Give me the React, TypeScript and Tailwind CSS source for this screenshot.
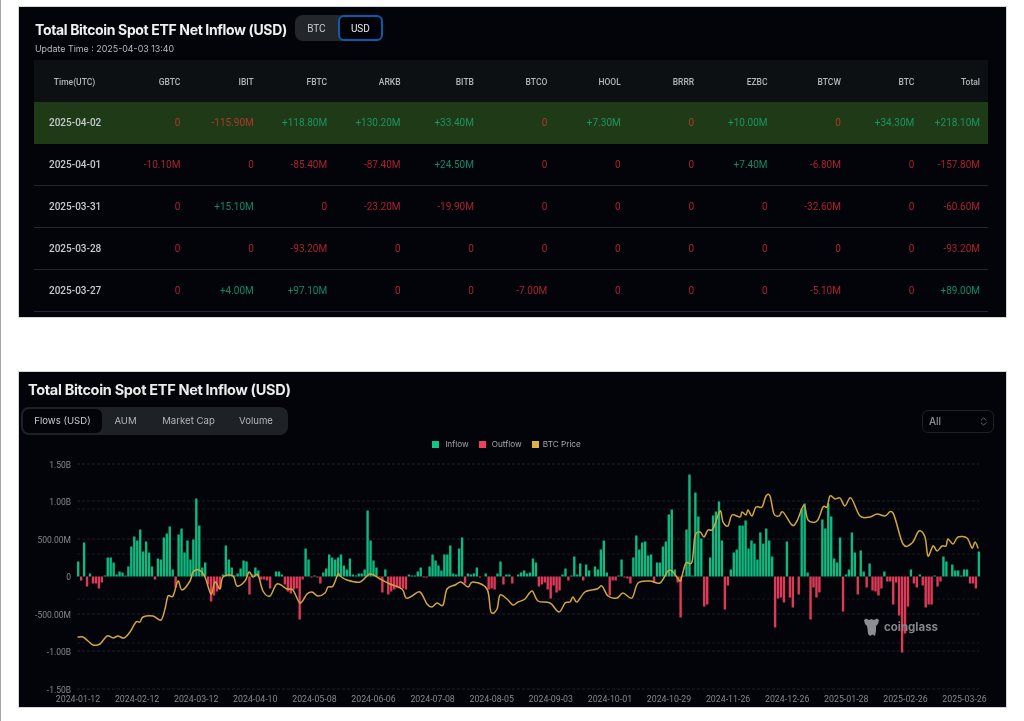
import { ChevronsUpDown } from 'lucide-react';

const columns = ['GBTC', 'IBIT', 'FBTC', 'ARKB', 'BITB', 'BTCO', 'HOOL', 'BRRR', 'EZBC', 'BTCW', 'BTC', 'Total'];

const rows = [
  { date: '2025-04-02', values: ['0', '-115.90M', '+118.80M', '+130.20M', '+33.40M', '0', '+7.30M', '0', '+10.00M', '0', '+34.30M', '+218.10M'] },
  { date: '2025-04-01', values: ['-10.10M', '0', '-85.40M', '-87.40M', '+24.50M', '0', '0', '0', '+7.40M', '-6.80M', '0', '-157.80M'] },
  { date: '2025-03-31', values: ['0', '+15.10M', '0', '-23.20M', '-19.90M', '0', '0', '0', '0', '-32.60M', '0', '-60.60M'] },
  { date: '2025-03-28', values: ['0', '0', '-93.20M', '0', '0', '0', '0', '0', '0', '0', '0', '-93.20M'] },
  { date: '2025-03-27', values: ['0', '+4.00M', '+97.10M', '0', '0', '-7.00M', '0', '0', '0', '-5.10M', '0', '+89.00M'] },
];

// bar heights in px from the zero line, one per trading day
const flows = [
  15, -4, 34, -10, 3, -7, -7, -12, -6, 1, 19, 19, 14, 2, 5, 4, 1, 10, 30, 40, 36, 47, 25, 35, 24, 10, -3, 18, 17, 39, 43, 50, 7, -11, 42, 48, 24, 36, 17, 37, 78, 51, 9, 14, -8, -25, -19, -15, -12, 2, 31, 17, 9, 1, 3, 8, 16, 15, -18, 2, 9, 6, -3, -3, -4, -12, 0, 5, 5, 2, -8, -15, -17, -13, -12, -43, -3, 28, 17, -1, 1, -1, -7, 4, 8, 22, 19, 17, 19,
  22, 11, 7, 18, 2, 1, 3, 3, 7, 66, 36, 16, 9, -1, -16, 7, -18, -15, -13, -11, -11, -12, -13, 2, 1, 1, 5, 9, -1, -1, 10, 22, 16, 11, 6, 22, 22, 31, 3, 2, 28, 39, -7, 3, 2, 3, 9, -1, 0, 3, -13, -12, -13, 3, 15, -8, 2, 2, -7, 0, 2, 4, 6, 3, 4, 18, 14, -10, -8, -6, -13, -22, -9, -16, -14, 2, 8, -4, 1, 20, 2, 13, -4, 12, 6, 0, 10, 7, 27, 36, 4, -19, -4, -4, 1, 17, -1, -2, -7, 19, 41, 27, 34, 35, 21, 22, -6, 14, 14, 30, 35, 62, 67, 7, -6,
  -41, 1, 47, 102, 1, 84, 60, 38, -30, -28, 19, 61, 65, 75, 36, -33, -9, 7, 24, 27, 51, 51, 56, 28, 36, 33, 17, 44, 33, 48, 36, 20, -51, -22, -21, -26, 35, -21, -31, 0, -18, 68, 73, 4, -43, -11, -21, -16, 57, 48, 73, 60, 18, 14, 39, -35, 2, 7, 44, 24, -18, 26, 5, -11, 13, -14, -15, -19, -12, 5, -5, -5, -28, -6, -39, -76, -57, -30, 7, -7, -11, 2, -9, -31, -28, -28, 1, -10, -5, 20, 15, 0, 12, 6, 6, 1, 7, 7, -7, -7, -12, 25,
];

const price =
  '78,638 83,638 88,642 93,646 100,645 107,637 113,639 118,637 124,639 130,633 136,623 140,623 143,618 153,617 161,621 165,610 168,597 173,597 178,582 182,591 190,582 193,573 199,571 205,578 211,595 215,583 220,590 223,578 233,577 237,587 245,582 249,573 253,578 258,576 263,592 270,597 277,585 287,590 293,591 300,604 307,595 312,593 318,597 325,594 328,588 333,587 338,575 ' +
  '340,577 347,581 360,583 370,575 380,580 390,585 402,590 406,599 412,597 420,593 427,605 432,608 437,604 443,606 447,590 455,586 461,583 468,588 473,583 487,590 491,613 497,610 500,596 507,600 513,606 518,603 525,600 532,592 538,602 550,604 559,613 565,604 570,603 573,598 577,603 585,593 597,590 602,587 608,597 617,599 623,594 632,599 638,584 650,582 660,584 668,572 673,573 680,582 ' +
  '682,577 686,564 692,563 695,537 700,533 704,538 708,531 713,530 720,512 723,523 728,527 732,516 740,518 742,513 746,516 748,511 752,517 756,508 762,508 766,497 770,497 774,515 779,517 783,513 792,526 797,522 804,506 808,521 817,522 823,508 827,508 830,497 835,500 840,499 845,507 851,499 860,517 870,518 877,515 885,517 893,514 903,545 912,544 919,532 925,538 928,557 933,547 937,552 942,547 946,547 948,540 953,545 958,538 967,539 972,549 975,543 978,549';

// catmull-rom through the price points so the line reads as a curve
function smoothPath(points: string) {
  const p = points.split(' ').map((s) => s.split(',').map(Number));
  let d = `M${p[0][0]} ${p[0][1]}`;
  for (let i = 0; i < p.length - 1; i++) {
    const a = p[Math.max(i - 1, 0)];
    const b = p[i];
    const c = p[i + 1];
    const e = p[Math.min(i + 2, p.length - 1)];
    const c1 = [b[0] + (c[0] - a[0]) / 6, b[1] + (c[1] - a[1]) / 6];
    const c2 = [c[0] - (e[0] - b[0]) / 6, c[1] - (e[1] - b[1]) / 6];
    d += ` C${c1[0].toFixed(1)} ${c1[1].toFixed(1)} ${c2[0].toFixed(1)} ${c2[1].toFixed(1)} ${c[0]} ${c[1]}`;
  }
  return d;
}

const yLabels = [
  ['1.50B', 465],
  ['1.00B', 502],
  ['500.00M', 540],
  ['0', 577],
  ['-500.00M', 615],
  ['-1.00B', 652],
  ['-1.50B', 690],
] as const;

const dates = ['2024-01-12', '2024-02-12', '2024-03-12', '2024-04-10', '2024-05-08', '2024-06-06', '2024-07-08', '2024-08-05', '2024-09-03', '2024-10-01', '2024-10-29', '2024-11-26', '2024-12-26', '2025-01-28', '2025-02-26', '2025-03-26'];

const gridA = [465, 502, 540, 615, 652, 690];
const gridB = [510, 555, 600, 644];

const tableCols = 'grid grid-cols-[81px_repeat(11,73.4px)_1fr]';
const panel = 'box-border w-[989px] border border-[#d6d6d6] bg-[#02040a]';

function ValueCell({ value, highlight }: { value: string; highlight: boolean }) {
  const color = value.startsWith('+')
    ? highlight
      ? 'text-[#1c9464]'
      : 'text-[#0f8a68]'
    : highlight
      ? 'text-[#ad3a2c]'
      : 'text-[#ad2132]';
  return <div className={`pr-[8px] text-right ${color}`}>{value}</div>;
}

function FlowChart() {
  return (
    <svg width={987} height={257} viewBox="19 450 987 257" className="block" fontFamily="Roboto, sans-serif">
      {gridA.map((y) => (
        <line key={y} x1={77} x2={979} y1={y} y2={y} stroke="#1e2125" strokeWidth={1} strokeDasharray="3 2" />
      ))}
      {gridB.map((y) => (
        <line key={y} x1={77} x2={979} y1={y} y2={y} stroke="#17191d" strokeWidth={1} strokeDasharray="3 2" />
      ))}
      {yLabels.map(([label, y]) => (
        <text key={label} x={71} y={y + 3.5} textAnchor="end" fontSize={8.5} fill="#85888c">
          {label}
        </text>
      ))}
      {dates.map((d, i) => (
        <text key={d} x={78 + i * 59.1} y={703} textAnchor="middle" fontSize={8.8} fill="#85888c">
          {d}
        </text>
      ))}
      {flows.map((h, i) =>
        h === 0 ? null : (
          <rect
            key={i}
            x={77 + i * 2.953}
            y={h > 0 ? 577.5 - h : 577.5}
            width={2.4}
            height={Math.abs(h)}
            fill={h > 0 ? '#0fb87f' : '#dd3a58'}
          />
        ),
      )}
      <path d={smoothPath(price)} fill="none" stroke="#d3a53c" strokeWidth={1.5} strokeLinejoin="round" strokeLinecap="round" />
      <path
        d="M864 621 L866 619.500 L869 621 L871.500 620 L874 621 L877 619.500 L879 621 L878 625 L876 627 L876 632 L875 637 L872.500 635.500 L870 637 L868 635 L867.500 630 L867 627 L865 625 Z"
        fill="#8b8d90"
      />
      <text x={884} y={632} fontSize={11.5} fontWeight={700} fill="#85878a" fontFamily="Inter, sans-serif">
        coinglass
      </text>
    </svg>
  );
}

export default function App() {
  return (
    <div className="relative flex h-[721px] w-[1024px] overflow-hidden bg-white blur-[0.5px] font-['Roboto',sans-serif]">
      <div className="w-px bg-[#a9a39e]" />
      <div className="flex flex-col pl-[17px] pt-[6px]">
        <section className={`${panel} h-[312px]`}>
          <div className="flex h-[34px] items-end pl-[16px]">
            <h1 className="mb-[2px] font-['Inter',sans-serif] text-[14px] leading-[18px] font-bold tracking-[-0.35px] text-[#f0f0f0]">
              Total Bitcoin Spot ETF Net Inflow (USD)
            </h1>
            <div className="ml-2 flex h-[26px] w-[88px] rounded-lg bg-[#23262b] text-[10px] text-[#c8cacc]">
              <span className="flex w-[44px] items-center justify-center">BTC</span>
              <span className="box-border flex w-[46px] items-center justify-center rounded-md border-2 border-[#0b5cad] bg-[#02040a] text-[#e8e8e8]">
                USD
              </span>
            </div>
          </div>
          <p className="mt-[2px] pl-[16px] font-['Inter',sans-serif] text-[8.9px] leading-[12px] text-[#b8babc]">Update Time : 2025-04-03 13:40</p>
          <div className="mt-[5px] ml-[15px] w-[954px]">
            <div className={`${tableCols} h-[42px] items-center bg-[#0d1012] pt-[2px] text-[8.5px] font-medium text-[#b4b6b8]`}>
              <div className="text-center">Time(UTC)</div>
              {columns.map((c) => (
                <div key={c} className="pr-[8px] text-right">
                  {c}
                </div>
              ))}
            </div>
            {rows.map((row, index) => (
              <div
                key={row.date}
                className={`${tableCols} box-border h-[42px] items-center border-b text-[10px] ${
                  index === 0 ? 'border-[#1f3a17] bg-[#1f3a17]' : 'border-[#23272c]'
                }`}
              >
                <div className="pl-[15px] font-medium text-[#c8cacb]">{row.date}</div>
                {row.values.map((value, i) => (
                  <ValueCell key={columns[i]} value={value} highlight={index === 0} />
                ))}
              </div>
            ))}
          </div>
        </section>

        <section className={`${panel} mt-[53px] h-[337px]`}>
          <h2 className="mt-[9px] ml-[9px] font-['Inter',sans-serif] text-[14.5px] leading-[18px] font-bold tracking-[-0.32px] text-[#ececec]">
            Total Bitcoin Spot ETF Net Inflow (USD)
          </h2>
          <div className="mt-[8px] flex items-center justify-between pr-[12px] pl-[2px]">
            <div className="flex h-[28px] w-[267px] items-center rounded-lg bg-[#1e2126] pl-[2px] font-['Inter',sans-serif] text-[9.6px] text-[#b4b6b8]">
              <span className="flex h-[24px] w-[79px] items-center justify-center rounded-md bg-[#02040a] text-[#c8cacc]">Flows (USD)</span>
              <span className="w-[47px] text-center">AUM</span>
              <span className="w-[79px] text-center">Market Cap</span>
              <span className="w-[56px] text-center">Volume</span>
            </div>
            <div className="box-border flex h-[23px] w-[72px] items-center justify-between rounded-md border border-[#1d2126] pr-[4px] pl-[6px] font-['Inter',sans-serif] text-[10px] font-medium text-[#8d8f93]">
              All
              <ChevronsUpDown size={11} strokeWidth={1.5} />
            </div>
          </div>
          <div className="mt-[3px] flex h-[12px] items-center justify-center gap-[10px] pr-[12px] font-['Inter',sans-serif] text-[8.2px] text-[#a4a6a9]">
            <span className="flex items-center gap-[6px]">
              <i className="h-[7px] w-[7px] bg-[#10c585]" />
              Inflow
            </span>
            <span className="flex items-center gap-[6px]">
              <i className="h-[7px] w-[7px] bg-[#f04060]" />
              Outflow
            </span>
            <span className="flex items-center gap-[4px]">
              <i className="h-[7px] w-[7px] bg-[#e0b040]" />
              BTC Price
            </span>
          </div>
          <div className="-mt-px">
            <FlowChart />
          </div>
        </section>
      </div>
    </div>
  );
}
